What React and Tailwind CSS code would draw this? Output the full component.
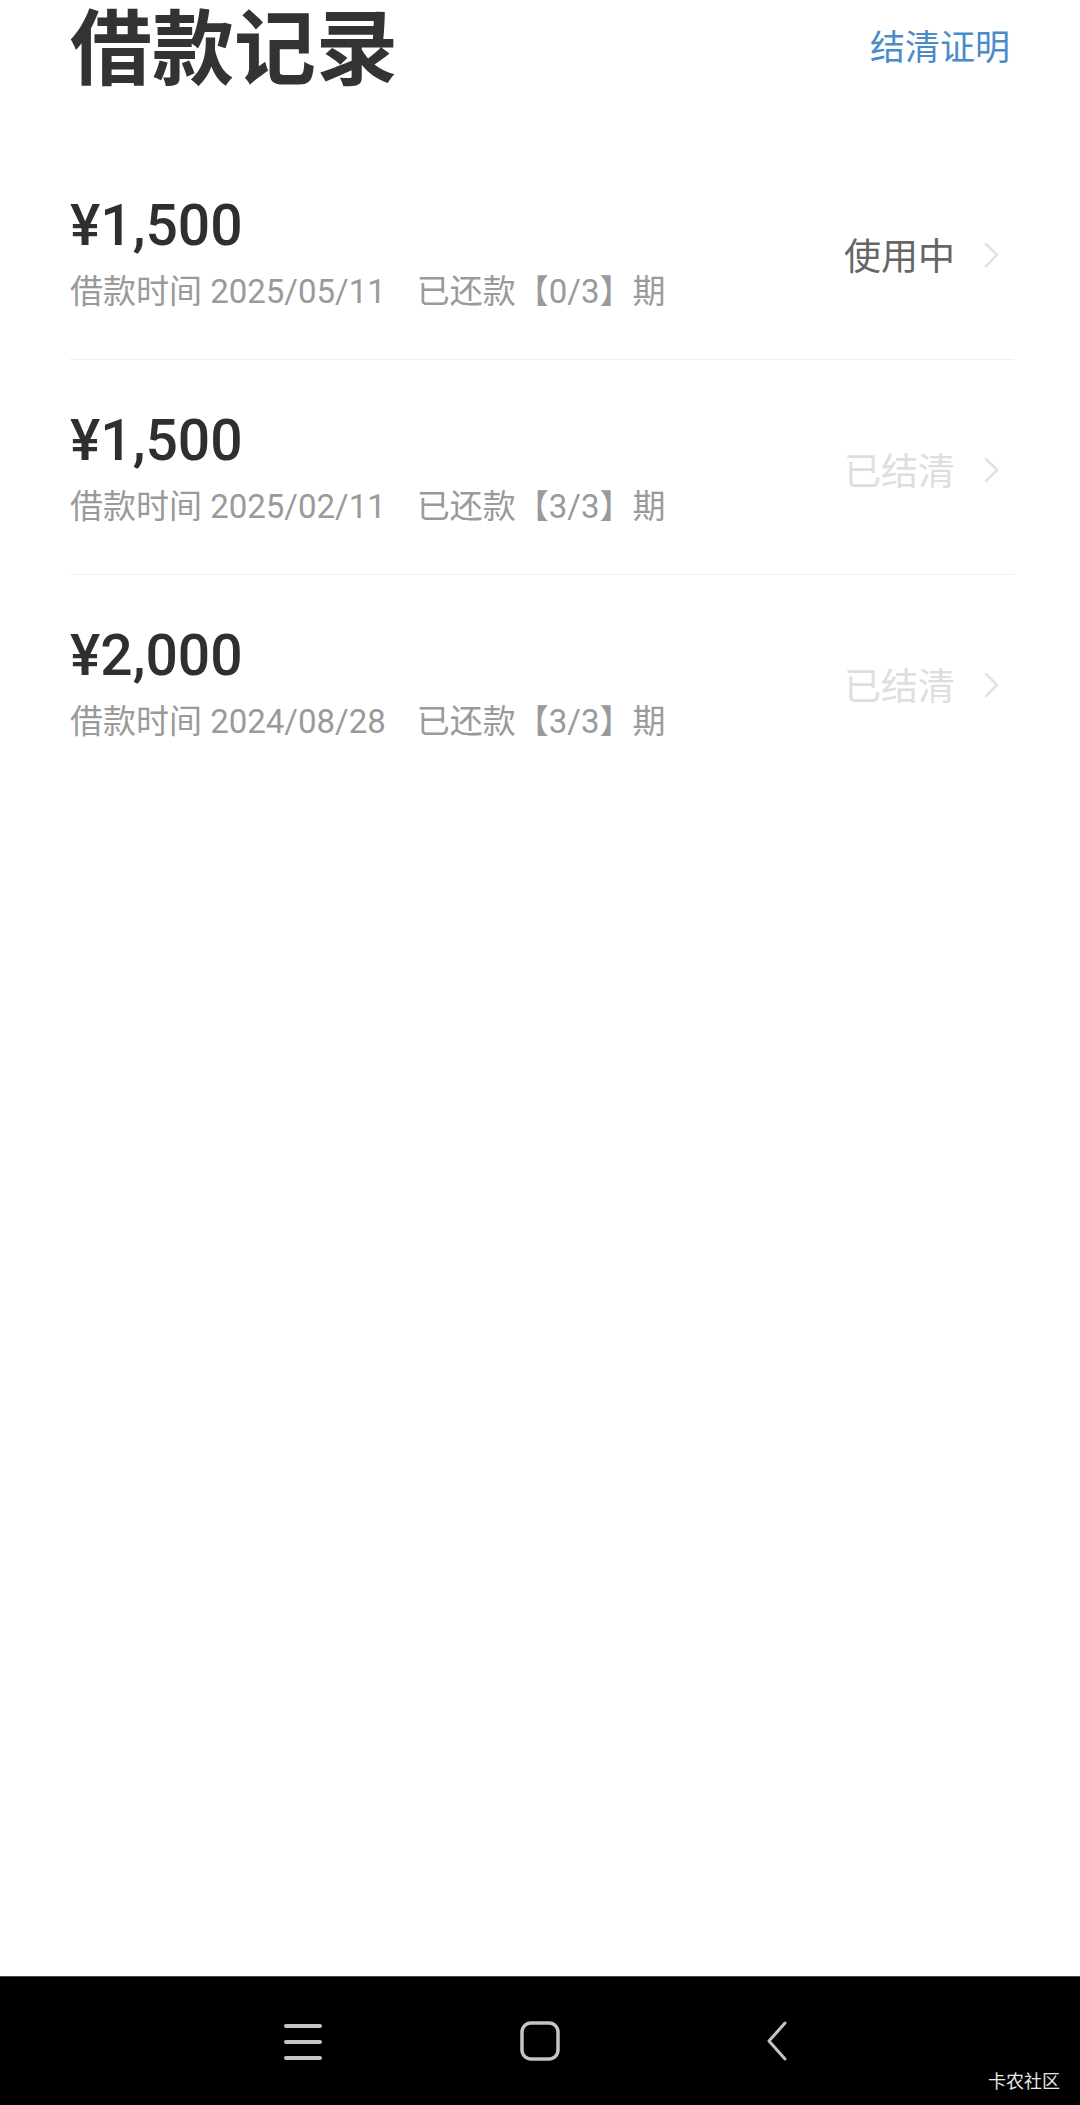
import React from "react";

const loans = [
  { amount: "¥1,500", date: "2025/05/11", paid: "0/3", status: "使用中", active: true },
  { amount: "¥1,500", date: "2025/02/11", paid: "3/3", status: "已结清", active: false },
  { amount: "¥2,000", date: "2024/08/28", paid: "3/3", status: "已结清", active: false },
];

const Chevron = () => (
  <svg width="17" height="26" viewBox="0 0 17 26" fill="none" className="ml-[28px]">
    <path d="M3 2 L14 13 L3 24" stroke="#e2e2e2" strokeWidth="2.5" strokeLinecap="round" strokeLinejoin="round" />
  </svg>
);

const LoanRow = ({ loan, last }) => (
  <div className={`flex items-center justify-between pt-[52px] pb-[51px] ${last ? "" : "border-b border-[#f0f0f0]"}`}>
    <div className="flex flex-col">
      <div className="text-[57px] leading-none font-medium text-[#2f2f2f] font-['Roboto','Noto_Sans_CJK_SC',sans-serif]">
        {loan.amount}
      </div>
      <div className="mt-[21px] text-[33px] leading-none text-[#9a9a9a] font-['Roboto','Noto_Sans_CJK_SC',sans-serif]">
        <span>借款时间 {loan.date}</span>
        <span className="ml-[31px]">已还款【{loan.paid}】期</span>
      </div>
    </div>
    <div className="flex items-center pr-[14px] pt-[4px]">
      <span
        className={`text-[37px] leading-none font-['Noto_Sans_CJK_SC',sans-serif] ${
          loan.active ? "text-[#666666]" : "text-[#dedede]"
        }`}
      >
        {loan.status}
      </span>
      <Chevron />
    </div>
  </div>
);

const NavBar = () => (
  <div className="relative h-[129px] bg-black border-t border-[#4a4a4a] flex justify-center items-center">
    <div className="w-[237px] flex justify-center">
      <svg width="40" height="38" viewBox="0 0 40 38" fill="none">
        <path d="M3 4 H37 M3 20 H37 M3 36 H37" stroke="#c4c4c4" strokeWidth="4" strokeLinecap="round" />
      </svg>
    </div>
    <div className="w-[237px] flex justify-center">
      <svg width="40" height="40" viewBox="0 0 40 40" fill="none">
        <rect x="2" y="2" width="36" height="36" rx="9" stroke="#c4c4c4" strokeWidth="3.5" />
      </svg>
    </div>
    <div className="w-[237px] flex justify-center">
      <svg width="22" height="40" viewBox="0 0 22 40" fill="none">
        <path d="M19 2 L3 20 L19 38" stroke="#c4c4c4" strokeWidth="3" strokeLinecap="round" strokeLinejoin="round" />
      </svg>
    </div>
    <span className="absolute right-[20px] bottom-[16px] text-[18px] leading-none text-[#e6e6e6] font-['Noto_Sans_CJK_SC',sans-serif]">
      卡农社区
    </span>
  </div>
);

export default function App() {
  return (
    <div className="w-[1080px] h-[2105px] flex flex-col bg-white font-['Noto_Sans_CJK_SC',sans-serif]">
      <div className="flex-1 pl-[70px] pr-[66px]">
        <div className="flex justify-between items-start h-[145px]">
          <h1 className="mt-[2px] text-[82px] leading-none font-bold text-[#333333]">借款记录</h1>
          <span className="mt-[27px] mr-[4px] text-[35px] leading-none text-[#4a8bc8]">结清证明</span>
        </div>
        {loans.map((loan, i) => (
          <LoanRow key={i} loan={loan} last={i === loans.length - 1} />
        ))}
      </div>
      <NavBar />
    </div>
  );
}
